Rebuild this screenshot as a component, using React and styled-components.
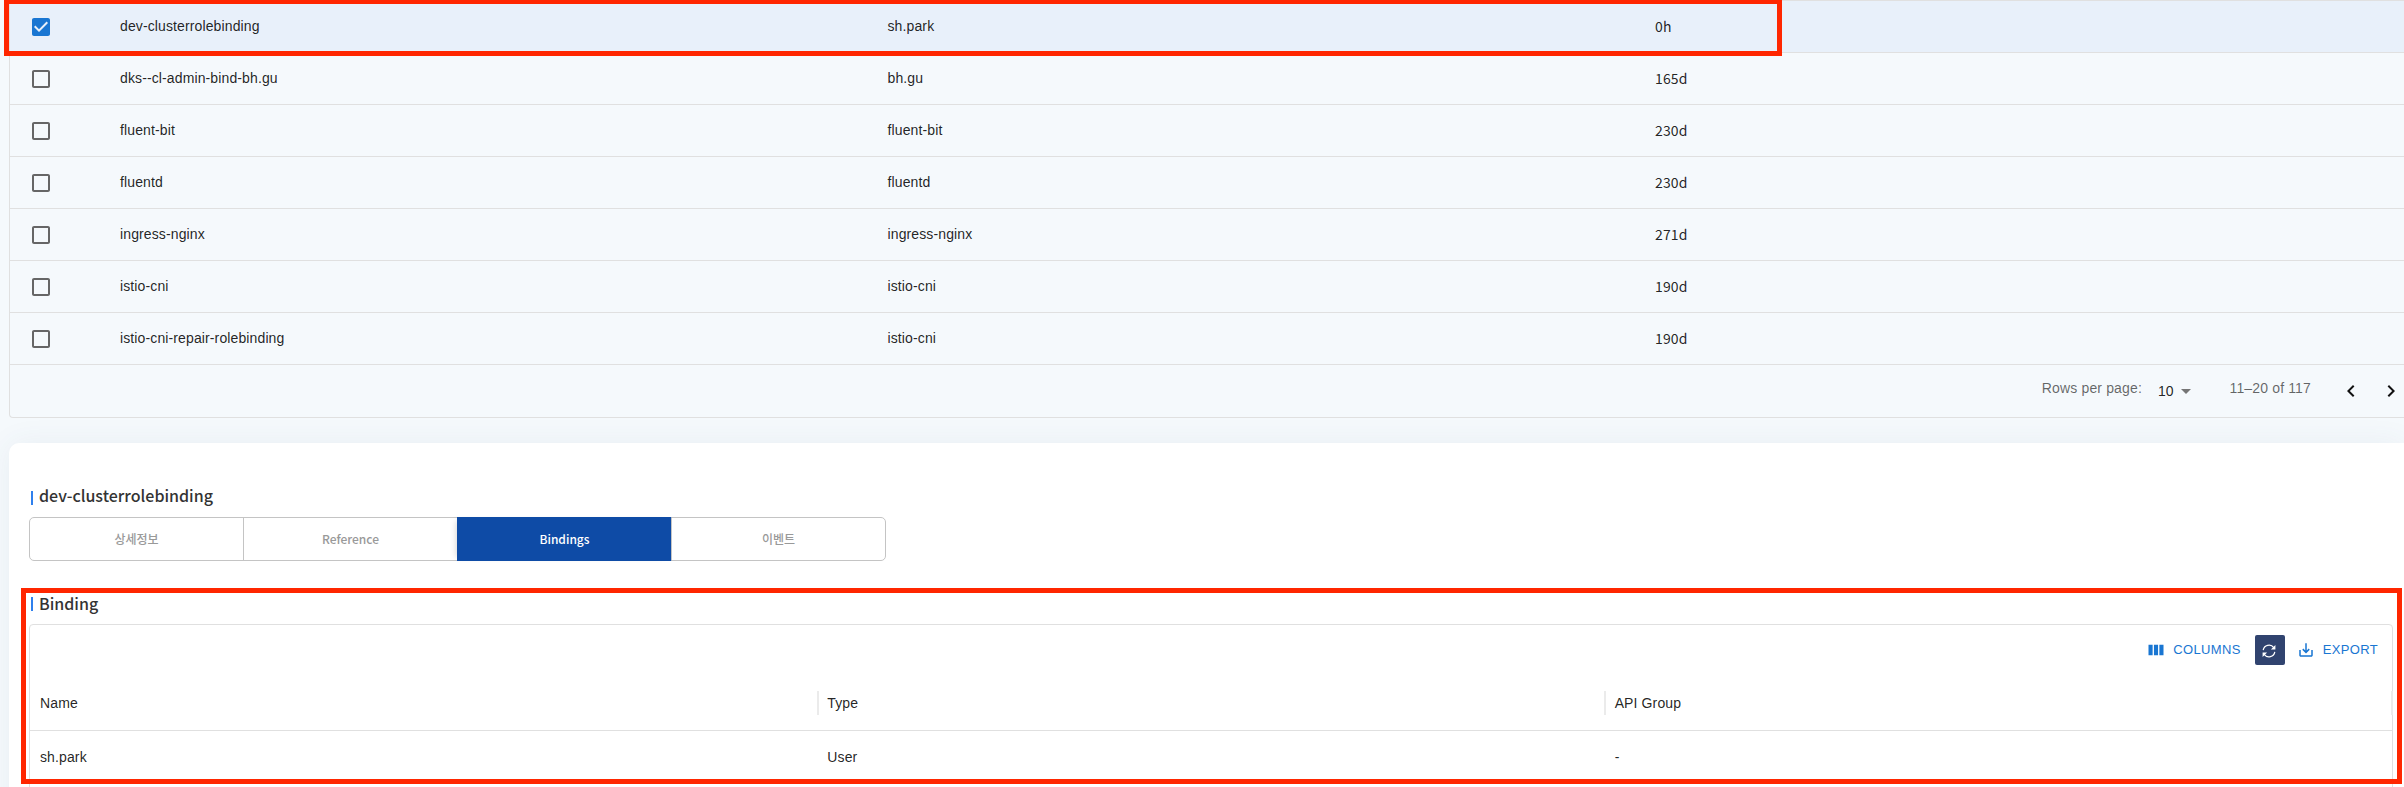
import React from 'react';
import styled, { createGlobalStyle, css } from 'styled-components';

const helvetica = '"Liberation Sans", Helvetica, Arial, sans-serif';
const noto = '"Noto Sans CJK KR", "Noto Sans", sans-serif';

const GlobalStyle = createGlobalStyle`
  *, *::before, *::after { box-sizing: border-box; }
  body { margin: 0; background: #f5f9fc; overflow: hidden; }
`;

const Page = styled.main`
  position: relative;
  height: 787px;
  padding-left: 9px;
  overflow: hidden;
  color: rgba(0, 0, 0, 0.87);
  font: 14px/20px ${helvetica};
`;

const BindingList = styled.section`
  height: 418px;
  border: 1px solid #e0e0e0;
  border-right: 0;
  border-radius: 0 0 0 4px;
`;

const ListRow = styled.div`
  display: grid;
  grid-template-columns: 100px 767.5px 767.5px 1fr;
  align-items: center;
  height: 52px;
  border-bottom: 1px solid #e0e0e0;
  background: ${(p) => (p.$selected ? '#e8f0fa' : 'transparent')};
`;

const Cell = styled.div`
  padding: 0 10px;
  letter-spacing: 0.12px;
  white-space: nowrap;
`;

const ListCell = styled(Cell)`
  padding-bottom: 1px;
`;

const AgeCell = styled(ListCell)`
  font-family: ${noto};
`;

const CheckCell = styled.div`
  display: flex;
  padding: 1px 0 0 19px;
`;

const Pagination = styled.footer`
  display: flex;
  align-items: center;
  justify-content: flex-end;
  height: 52px;
  padding-right: 1px;
  color: rgba(0, 0, 0, 0.6);
`;

const PageLabel = styled.span`
  letter-spacing: 0.15px;
  padding-bottom: 6px;
  white-space: nowrap;
`;

const PageSize = styled.button`
  display: flex;
  align-items: center;
  margin: 0 32px 0 16px;
  padding: 0;
  border: 0;
  background: none;
  color: rgba(0, 0, 0, 0.87);
  font: 14px/20px ${helvetica};
`;

const PageSizeValue = styled.span`
  padding-bottom: 1px;
`;

const PageArrow = styled.button`
  display: flex;
  padding: 0;
  border: 0;
  background: none;
  margin-left: ${(p) => p.$gap}px;
`;

const Details = styled.section`
  height: 400px;
  margin-top: 25px;
  padding: 40px 11px 0 20px;
  border-radius: 10px 0 0 0;
  background: #fff;
  box-shadow: 0 0 30px rgba(60, 90, 120, 0.065);
`;

const Title = styled.h2`
  display: flex;
  height: 24px;
  margin: 0 0 ${(p) => p.$gap}px;
  padding-left: 2px;
  color: #333;
  font: 500 16px/24px ${noto};

  &::before {
    content: '';
    width: 2px;
    height: 14px;
    margin: ${(p) => p.$bar}px 6px 0 0;
    background: #2f80ed;
  }
`;

const Tabs = styled.nav`
  display: flex;
  width: 857px;
  height: 44px;
  margin-bottom: 30px;
`;

const Tab = styled.button`
  width: 215px;
  padding: 0;
  border: 1px solid #c4c4c4;
  background: #fff;
  color: #999;
  font: 500 12px/18px ${noto};

  & + & { margin-left: -1px; }
  &:first-child { border-radius: 5px 0 0 5px; }
  &:last-child { border-radius: 0 5px 5px 0; }

  ${(p) => p.$active && css`
    border-color: #0e4ba6;
    background: #0e4ba6;
    color: #fff;
    box-shadow: -5px 0 6px -4px rgba(0, 0, 0, 0.16);
  `}
`;

const Grid = styled.div`
  height: 190px;
  border: 1px solid #e0e0e0;
  border-radius: 4px;
`;

const Toolbar = styled.div`
  display: flex;
  align-items: center;
  justify-content: flex-end;
  height: 50px;
  padding: 10px 14px 10px 0;
`;

const ToolButton = styled.button`
  display: flex;
  align-items: center;
  gap: 8px;
  padding: 0;
  border: 0;
  background: none;
  color: #1976d2;
  font: 13px/22px ${helvetica};
  letter-spacing: 0.34px;
`;

const RefreshButton = styled.button`
  display: flex;
  align-items: center;
  justify-content: center;
  width: 30px;
  height: 30px;
  margin: 0 12px 0 14px;
  padding: 1px 1px 0 0;
  border: 0;
  border-radius: 2px;
  background: #30436f;
  color: #fff;
`;

const GridRow = styled.div`
  display: grid;
  grid-template-columns: repeat(3, 1fr);
  align-items: center;
  height: ${(p) => p.$height}px;
  padding-top: 1px;
  border-bottom: 1px solid #e0e0e0;
`;

const HeaderCell = styled(Cell)`
  display: flex;
  align-items: center;
  justify-content: space-between;
  height: 24px;
  padding-right: 0;

  &::after {
    content: '';
    width: 2px;
    height: 24px;
    margin-right: -1.5px;
    background: #ebebeb;
  }
`;

const Highlight = styled.div`
  position: absolute;
  left: ${(p) => p.$x}px;
  top: ${(p) => p.$y}px;
  width: ${(p) => p.$w}px;
  height: ${(p) => p.$h}px;
  border: 5px solid #ff2600;
  pointer-events: none;
`;

const Icon = ({ d, size = 24, fill = 'currentColor' }) => (
  <svg width={size} height={size} viewBox="0 0 24 24" fill={fill}>
    <path d={d} />
  </svg>
);

const RefreshIcon = () => (
  <svg width="16" height="16" viewBox="0 0 16 16" fill="none">
    <path
      d="M2.2 7.2A5.9 5.9 0 0 1 12.8 4.6M13.8 8.8A5.9 5.9 0 0 1 3.2 11.4"
      stroke="currentColor"
      strokeWidth="1.2"
    />
    <path d="M14.4 1.9v4.5H9.9zM1.6 14.1V9.6h4.5z" fill="currentColor" />
  </svg>
);

const paths = {
  checked: 'M19 3H5c-1.11 0-2 .9-2 2v14c0 1.1.89 2 2 2h14c1.11 0 2-.9 2-2V5c0-1.1-.89-2-2-2zm-9 14l-5-5 1.41-1.41L10 14.17l7.59-7.59L19 8l-9 9z',
  unchecked: 'M19 5v14H5V5h14m0-2H5c-1.1 0-2 .9-2 2v14c0 1.1.9 2 2 2h14c1.1 0 2-.9 2-2V5c0-1.1-.9-2-2-2z',
  dropdown: 'M7 10l5 5 5-5z',
  left: 'M15.41 16.59L10.83 12l4.58-4.59L14 6l-6 6 6 6 1.41-1.41z',
  right: 'M8.59 16.59L13.17 12 8.59 7.41 10 6l6 6-6 6-1.41-1.41z',
  columns: 'M2 5h5.5v14H2zM9.25 5h5.5v14h-5.5zM16.5 5H22v14h-5.5z',
  download: 'M19 12v7H5v-7H3v7c0 1.1.9 2 2 2h14c1.1 0 2-.9 2-2v-7h-2zm-6 .67l2.59-2.58L17 11.5l-5 5-5-5 1.41-1.41L11 12.67V3h2z',
};

const bindings = [
  ['dev-clusterrolebinding', 'sh.park', '0h'],
  ['dks--cl-admin-bind-bh.gu', 'bh.gu', '165d'],
  ['fluent-bit', 'fluent-bit', '230d'],
  ['fluentd', 'fluentd', '230d'],
  ['ingress-nginx', 'ingress-nginx', '271d'],
  ['istio-cni', 'istio-cni', '190d'],
  ['istio-cni-repair-rolebinding', 'istio-cni', '190d'],
];

const tabs = ['상세정보', 'Reference', 'Bindings', '이벤트'];

export default function App() {
  return (
    <>
      <GlobalStyle />
      <Page>
        <BindingList>
          {bindings.map(([name, subject, age], i) => (
            <ListRow key={name} $selected={i === 0}>
              <CheckCell>
                <Icon d={i === 0 ? paths.checked : paths.unchecked} fill={i === 0 ? '#1976d2' : '#666'} />
              </CheckCell>
              <ListCell>{name}</ListCell>
              <ListCell>{subject}</ListCell>
              <AgeCell>{age}</AgeCell>
            </ListRow>
          ))}
          <Pagination>
            <PageLabel>Rows per page:</PageLabel>
            <PageSize>
              <PageSizeValue>10</PageSizeValue>
              <Icon d={paths.dropdown} fill="#757575" />
            </PageSize>
            <PageLabel>11–20 of 117</PageLabel>
            <PageArrow $gap={28}><Icon d={paths.left} fill="#111" /></PageArrow>
            <PageArrow $gap={16}><Icon d={paths.right} fill="#111" /></PageArrow>
          </Pagination>
        </BindingList>

        <Details>
          <Title $bar={8} $gap={10}>dev-clusterrolebinding</Title>
          <Tabs>
            {tabs.map((tab) => (
              <Tab key={tab} $active={tab === 'Bindings'}>{tab}</Tab>
            ))}
          </Tabs>
          <Title $bar={6} $gap={9}>Binding</Title>
          <Grid>
            <Toolbar>
              <ToolButton><Icon d={paths.columns} size={18} />COLUMNS</ToolButton>
              <RefreshButton><RefreshIcon /></RefreshButton>
              <ToolButton><Icon d={paths.download} size={18} />EXPORT</ToolButton>
            </Toolbar>
            <GridRow $height={56}>
              <HeaderCell>Name</HeaderCell>
              <HeaderCell>Type</HeaderCell>
              <HeaderCell>API Group</HeaderCell>
            </GridRow>
            <GridRow $height={52}>
              <Cell>sh.park</Cell>
              <Cell>User</Cell>
              <Cell>-</Cell>
            </GridRow>
          </Grid>
        </Details>

        <Highlight $x={4} $y={-1} $w={1778} $h={57} />
        <Highlight $x={21} $y={588} $w={2381} $h={196} />
      </Page>
    </>
  );
}
